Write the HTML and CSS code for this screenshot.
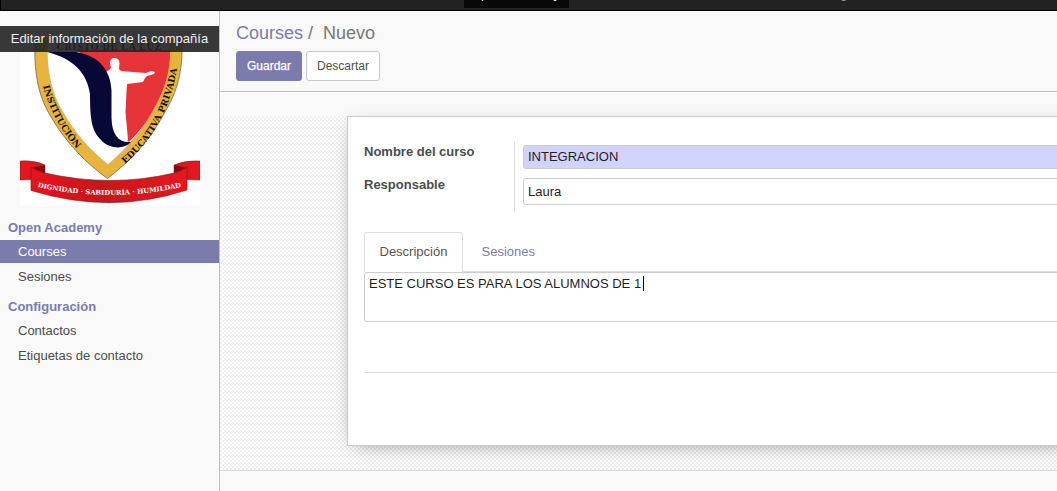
FILE: index.html
```html
<!DOCTYPE html>
<html lang="es">
<head>
<meta charset="utf-8">
<title>Nuevo - Courses</title>
<link rel="stylesheet" href="styles.css">
</head>
<body>
<div class="app">
  <nav class="navbar">
    <a class="nav-item nav-active">Open Academy</a>
    <a class="nav-item nav-config">Configuración</a>
  </nav>
  <div class="main">
    <aside class="sidebar">
      <div class="company">
        <svg class="logo" width="180" height="179" viewBox="20 26 180 179">
          <defs>
            <path id="ring-left" d="M43 86 Q52 120 77 149"/>
            <path id="ring-right" d="M125 164 C150 143 170 112 177.500 66"/>
            <path id="ribbon-line" d="M37.500 187 Q111 203 184 186.500"/>
            <linearGradient id="ribbon" x1="0" x2="1" y1="0" y2="0">
              <stop offset="0" stop-color="#e5141c"/><stop offset=".45" stop-color="#c9151b"/><stop offset="1" stop-color="#e8171e"/>
            </linearGradient>
            <linearGradient id="tail" x1="0" x2="1" y1="0" y2="0">
              <stop offset="0" stop-color="#e5181e"/><stop offset=".5" stop-color="#b91217"/><stop offset="1" stop-color="#e5181e"/>
            </linearGradient>
          </defs>
          <rect x="20" y="26" width="180" height="179" fill="#fff"/>
          <path d="M35 40 H182 C183 72 177 92 165 112 C149 142 130 161 107.500 178.500 C87 164 67 144 51 117 C37 94 34 70 35 40Z" fill="#e8b43c" stroke="#666" stroke-width=".8"/>
          <path d="M47 40 H170 C170 75 164 91 152 112 C141 133 124 151 108 164.500 C92 152 75 134 63 112 C51 92 47 72 47 40Z" fill="#fff" stroke="#aaa" stroke-width=".5"/>
          <path d="M78 50 H170 C170 75 164 91 152 112 C146 123 139 132 129 142 L125 138 L124 84 L108 88Z" fill="#e53338"/>
          <path d="M106 72 L109 70 L111 68 L110 63 Q110 58 114.500 58 Q119 58 119.500 63 L119 69 L121 71 L146 73 L151 71 L155 72 L154 74 L147 76 L145 78 L143 82 L127 84 L126.500 92 L125.500 112 L128 140 L112 142 L108 96Z" fill="#fff"/>
          <path d="M47 52 H76 C98 55 111 70 111.500 91 V118 C112 134 118 143 131 142 C124 150 109 149 101 140 C92 131 90 121 90 94 C87 72 72 58 47 52Z" fill="#080837"/>
          <text class="ring-text"><textPath href="#ring-left" textLength="72">INSTITUCIÓN</textPath></text>
          <text class="ring-text"><textPath href="#ring-right" textLength="111">EDUCATIVA PRIVADA</textPath></text>
          <text x="109" y="49.500" class="crest-text" text-anchor="middle" textLength="105">CRISTO DE LA LUZ</text>
          <path d="M20 161 Q34 160 45 165 V179 L20 180Z M200 161 Q186 160 174 165 V179 L200 180Z" fill="url(#tail)" stroke="#76191b" stroke-width=".5"/>
          <path d="M31 168 L45 165 V173Z M187 168 L174 165 V173Z" fill="#82090e"/>
          <path d="M31 167 Q38 171 45 173 Q111 188 174 173 Q181 171 187 167 V190 Q111 215 31 190.500Z" fill="url(#ribbon)" stroke="#76191b" stroke-width=".6"/>
          <text class="motto"><textPath href="#ribbon-line" textLength="145" lengthAdjust="spacingAndGlyphs">DIGNIDAD · SABIDURÍA · HUMILDAD</textPath></text>
        </svg>
        <span class="company-tip">Editar información de la compañía</span>
      </div>
      <h2 class="menu-title">Open Academy</h2>
      <ul class="menu"><li class="menu-item active">Courses</li><li class="menu-item">Sesiones</li></ul>
      <h2 class="menu-title">Configuración</h2>
      <ul class="menu"><li class="menu-item">Contactos</li><li class="menu-item">Etiquetas de contacto</li></ul>
    </aside>
    <main class="content">
      <header class="control-panel">
        <div class="breadcrumb"><a class="crumb-link">Courses</a><span class="crumb-sep">/</span><span>Nuevo</span></div>
        <div class="buttons"><button class="btn btn-primary">Guardar</button><button class="btn">Descartar</button></div>
      </header>
      <div class="strip"></div>
      <section class="form-background">
        <div class="sheet">
          <div class="group">
            <div class="labels"><label>Nombre del curso</label><label>Responsable</label></div>
            <div class="fields"><div class="field required">INTEGRACION</div><div class="field select">Laura</div></div>
          </div>
          <div class="tabs"><div class="tab tab-active">Descripción</div><div class="tab">Sesiones</div></div>
          <div class="textarea">ESTE CURSO ES PARA LOS ALUMNOS DE 1<span class="caret"></span></div>
          <div class="divider"></div>
        </div>
      </section>
      <footer class="footer"></footer>
    </main>
  </div>
</div>
</body>
</html>
```
FILE: styles.css
```css
* { box-sizing: border-box; }
body { margin: 0; font: 13px/18px "Liberation Sans", Arial, sans-serif; color: #4c4c4c; background: #f9f9f9; }
.app { height: 491px; display: flex; flex-direction: column; overflow: hidden; }
.navbar { flex: none; height: 11px; display: flex; align-items: flex-end; background: #222; border-bottom: 1px solid #000; border-left: 1px solid #000; padding: 0 0 2px 463px; overflow: hidden; }
.nav-item { line-height: 18px; padding: 0 7px 5px; color: #9d9d9d; }
.nav-active { width: 105px; background: #080808; color: #fff; }
.nav-config { margin-left: 234px; }
.main { flex: 1; min-height: 0; display: flex; }
.sidebar { flex: none; width: 220px; border-right: 1px solid #c1c1c1; padding-top: 15px; }
.company { position: relative; height: 179px; padding-left: 20px; margin-bottom: 14px; }
.logo { display: block; }
.company-tip { position: absolute; left: 0; top: 0; width: 219px; height: 26px; line-height: 25px; text-align: center; color: #eee; background: rgba(34, 34, 34, .9); white-space: nowrap; font-size: 13px; }
.ring-text { font: bold 9px "DejaVu Serif", serif; fill: #111; }
.crest-text { font: bold 10px "Liberation Serif", serif; fill: #111; }
.motto { font: bold 6.5px "DejaVu Serif", serif; fill: #fff; }
.menu-title { margin: 0; padding-left: 8px; font-size: 13px; line-height: 18px; height: 21px; color: #7c7bad; }
.menu { list-style: none; margin: 0 0 10px; padding: 0; }
.menu-item { height: 23px; line-height: 23px; padding-left: 18px; margin-bottom: 2px; }
.menu-item:last-child { margin-bottom: 0; }
.active { background: #7c7bad; color: #fff; }
.content { flex: 1; min-width: 0; display: flex; flex-direction: column; }
.control-panel { height: 81px; flex: none; border-bottom: 1px solid #c1c1c1; padding: 10px 16px 0; }
.breadcrumb { font-size: 18px; line-height: 24px; color: #777; display: flex; }
.crumb-link { color: #7c7bad; }
.crumb-sep { margin: 0 10px 0 5px; }
.buttons { display: flex; gap: 4px; margin-top: 6px; }
.btn { font: 12px/18px "Liberation Sans", Arial, sans-serif; height: 30px; padding: 0; width: 74px; border: 1px solid #c9c9c9; border-radius: 3px; background: #fff; color: #4c4c4c; }
.btn-primary { width: 66px; background: #7c7bad; border-color: #7c7bad; color: #fff; -webkit-text-stroke: .25px #fff; }
.strip { height: 24px; flex: none; }
.form-background { height: 354px; flex: none; padding-left: 127px; background: conic-gradient(#eee 25%, #fff 0 50%, #eee 0 75%, #fff 0) 0 0 / 4px 4px; }
.sheet { height: 330px; width: 730px; background: #fff; border: 1px solid #c8c8d3; box-shadow: 0 5px 20px -8px rgba(0, 0, 0, .45); padding: 25px 0 0 16px; }
.group { display: flex; height: 70px; }
.labels { width: 151px; border-right: 1px solid #ddd; font-weight: bold; }
.labels label { display: block; height: 33px; line-height: 20px; }
.fields { flex: 1; padding: 3px 0 0 8px; }
.field { height: 24px; line-height: 21px; border: 1px solid #ccc; border-radius: 3px; padding-left: 4px; color: #1f1f1f; }
.required { background: #d2d2ff; }
.select { height: 27px; margin-top: 9px; line-height: 25px; }
.tabs { display: flex; margin-top: 20px; height: 40px; border-bottom: 1px solid #ddd; }
.tab { height: 39px; line-height: 39px; padding: 0 18.5px; color: #7c7bad; }
.tab-active { width: 99px; height: 40px; line-height: 37px; padding: 0 0 0 14.5px; border: 1px solid #ddd; border-bottom: 0; border-radius: 3px 3px 0 0; color: #555; background: #fff; }
.textarea { height: 50px; border: 1px solid #ccc; border-radius: 3px; padding: 1px 0 0 4px; color: #1f1f1f; line-height: 20px; white-space: nowrap; }
.caret { display: inline-block; width: 1px; height: 15px; background: #000; vertical-align: -3px; margin-left: 2px; }
.divider { margin-top: 50px; border-top: 1px solid #ddd; }
.footer { flex: 1; border-top: 1px solid #ddd; background: #f9f9f9; }
```
